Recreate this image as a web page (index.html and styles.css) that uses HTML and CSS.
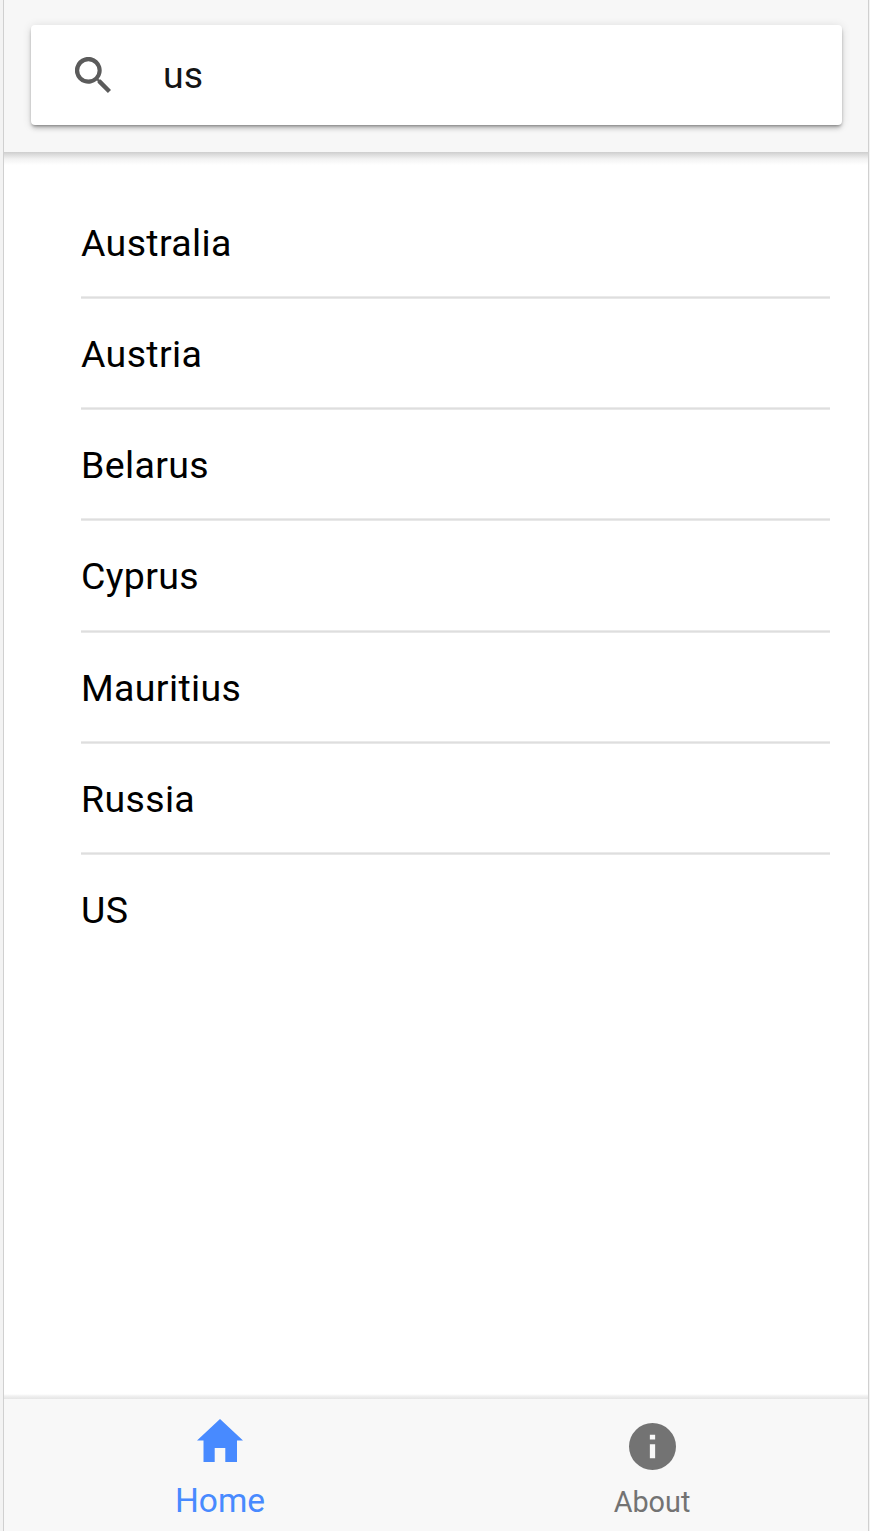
FILE: index.html
```html
<!DOCTYPE html>
<html lang="en">
<head>
<meta charset="utf-8">
<title>Countries</title>
<link rel="stylesheet" href="styles.css">
</head>
<body>
<div class="app">
  <header class="toolbar">
    <label class="searchbar">
      <svg class="search-icon" viewBox="0 0 36 36" aria-hidden="true"><path d="M25.700 22.600h-1.600l-.6-.6a13.400 13.400 0 1 0-1.500 1.500l.6.6v1.600L32.900 36l3.100-3.100zM13.400 22.600a9.200 9.200 0 1 1 0-18.400 9.200 9.200 0 0 1 0 18.400z"/></svg>
      <span class="query">us</span>
    </label>
  </header>
  <main class="content">
    <ul class="list">
      <li class="item">Australia</li>
      <li class="item">Austria</li>
      <li class="item">Belarus</li>
      <li class="item">Cyprus</li>
      <li class="item">Mauritius</li>
      <li class="item">Russia</li>
      <li class="item">US</li>
    </ul>
  </main>
  <nav class="tabs">
    <a class="tab active"><svg class="home-icon" viewBox="0 0 46 43" aria-hidden="true"><path d="M17.700 43V29h10.600v14h11.700V21.500h6L23 0 0 21.500h6.500V43z"/></svg><span>Home</span></a>
    <a class="tab"><svg class="info-icon" viewBox="0 0 48 48" aria-hidden="true"><path fill-rule="evenodd" d="M24 0a24 24 0 1 0 0 48 24 24 0 0 0 0-48zm-2.700 12h5.400v4.800h-5.400zm0 9.800h5.400V36h-5.400z"/></svg><span>About</span></a>
  </nav>
</div>
</body>
</html>
```
FILE: styles.css
```css
* { box-sizing: border-box; }
body { margin: 0; background: #f3f3f3; font-family: Roboto, sans-serif; color: #000; }
.app { display: flex; flex-direction: column; height: 1531px; margin: 0 1px 0 3px; border-left: 1px solid #d0d0d0; border-right: 1px solid #d0d0d0; background: #fff; }
.toolbar { height: 152px; padding: 24.500px 26.500px 27px; background: #f7f7f7; }
.searchbar { display: flex; align-items: center; height: 100.500px; padding-left: 44.500px; background: #fff; border-radius: 4px; box-shadow: 0 4px 5px -1px rgba(0,0,0,.2), 0 2px 3px -1px rgba(0,0,0,.32), 0 1px 10px rgba(0,0,0,.12); }
.search-icon { width: 36px; height: 36px; fill: #5b5b5b; }
.query { margin: 0 0 0 52px; font-size: 37.500px; letter-spacing: .2px; color: #141414; }
.content { flex: 1; padding: 35.800px 38px 0 77px; background: linear-gradient(#cecece, #dedede 3px, #f2f2f2 7px, #fff 13px); }
.list { margin: 0; padding: 0; list-style: none; }
.item { height: 111.200px; line-height: 110px; font-size: 37.500px; letter-spacing: .35px; background: linear-gradient(to top, #e8e8e8 1px, #dedede 1px 2px, #eaeaea 2px 3px, transparent 3px); }
.item:last-child { background: none; }
.tabs { display: flex; height: 137px; padding-top: 5px; background: linear-gradient(#fff, #f0f0f0 2px, #e5e5e5 5px, #f8f8f8 5px); }
.tab { flex: 1; display: flex; flex-direction: column; align-items: center; padding-top: 23.500px; color: #737373; fill: currentColor; font-size: 28.800px; line-height: 36px; }
.tab.active { padding-top: 20px; color: #488aff; font-size: 33.500px; line-height: 42px; }
.home-icon { width: 46px; height: 43px; margin-bottom: 18px; }
.info-icon { width: 47px; height: 47px; margin-bottom: 14px; }
```
